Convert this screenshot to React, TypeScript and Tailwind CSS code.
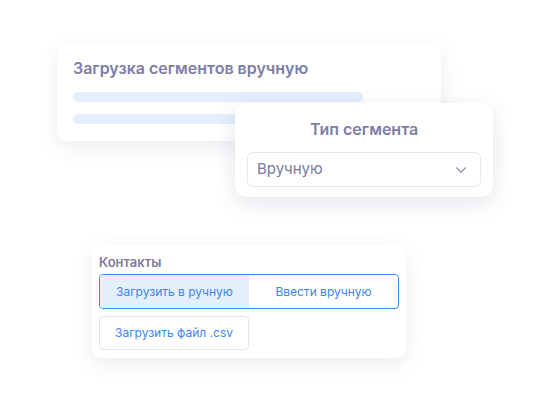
import { ChevronDown } from 'lucide-react';

export default function App() {
  return (
    <div
      className="relative w-[550px] h-[400px] bg-white overflow-hidden"
      style={{ fontFamily: 'Inter, "Noto Sans", sans-serif' }}
    >
      {/* Карточка: загрузка сегментов */}
      <div className="absolute left-[57px] top-[43px] w-[384px] h-[98px] rounded-[10px] bg-white shadow-[0_6px_20px_rgba(60,70,110,0.10)] px-4 pt-[15px]">
        <h2 className="text-[16px] leading-[20px] font-semibold text-[#7d7ea6]">Загрузка сегментов вручную</h2>
        <div className="mt-[14px] w-[290px] h-[10px] rounded-full bg-[#e4eefc]" />
        <div className="mt-[12px] w-[290px] h-[10px] rounded-full bg-[#e4eefc]" />
      </div>

      {/* Карточка: тип сегмента */}
      <div className="absolute left-[235px] top-[103px] w-[258px] h-[94px] rounded-[12px] bg-white shadow-[0_6px_22px_rgba(60,70,110,0.14)] px-[12px] pt-[16px]">
        <h3 className="text-center text-[16px] leading-[20px] font-semibold text-[#7d7ea6]">Тип сегмента</h3>
        <div className="mt-[13px] h-[35px] flex items-center justify-between rounded-[6px] border border-[#e6e7ef] pl-[9px] pr-[10px]">
          <span className="text-[15px] text-[#7a7b9f]">Вручную</span>
          <ChevronDown size={18} strokeWidth={1.5} className="text-[#8f90b0]" />
        </div>
      </div>

      {/* Карточка: контакты */}
      <div className="absolute left-[92px] top-[245px] w-[314px] h-[113px] rounded-[10px] bg-white shadow-[0_6px_20px_rgba(60,70,110,0.10)] px-[7px] pt-[9px]">
        <div className="text-[13px] leading-[16px] font-semibold text-[#7f7b99]">Контакты</div>
        <div className="mt-[4px] h-[35px] flex rounded-[4px] border border-[#3d8af5] overflow-hidden">
          <div className="w-1/2 flex items-center justify-center bg-[#e5f0fd] text-[12px] text-[#3d85ee]">Загрузить в ручную</div>
          <div className="w-1/2 flex items-center justify-center text-[12px] text-[#3d85ee]">Ввести вручную</div>
        </div>
        <div className="mt-[7px] w-[150px] h-[34px] flex items-center justify-center rounded-[4px] border border-[#e3e5ee] text-[12px] text-[#3d85ee]">
          Загрузить файл .csv
        </div>
      </div>
    </div>
  );
}
